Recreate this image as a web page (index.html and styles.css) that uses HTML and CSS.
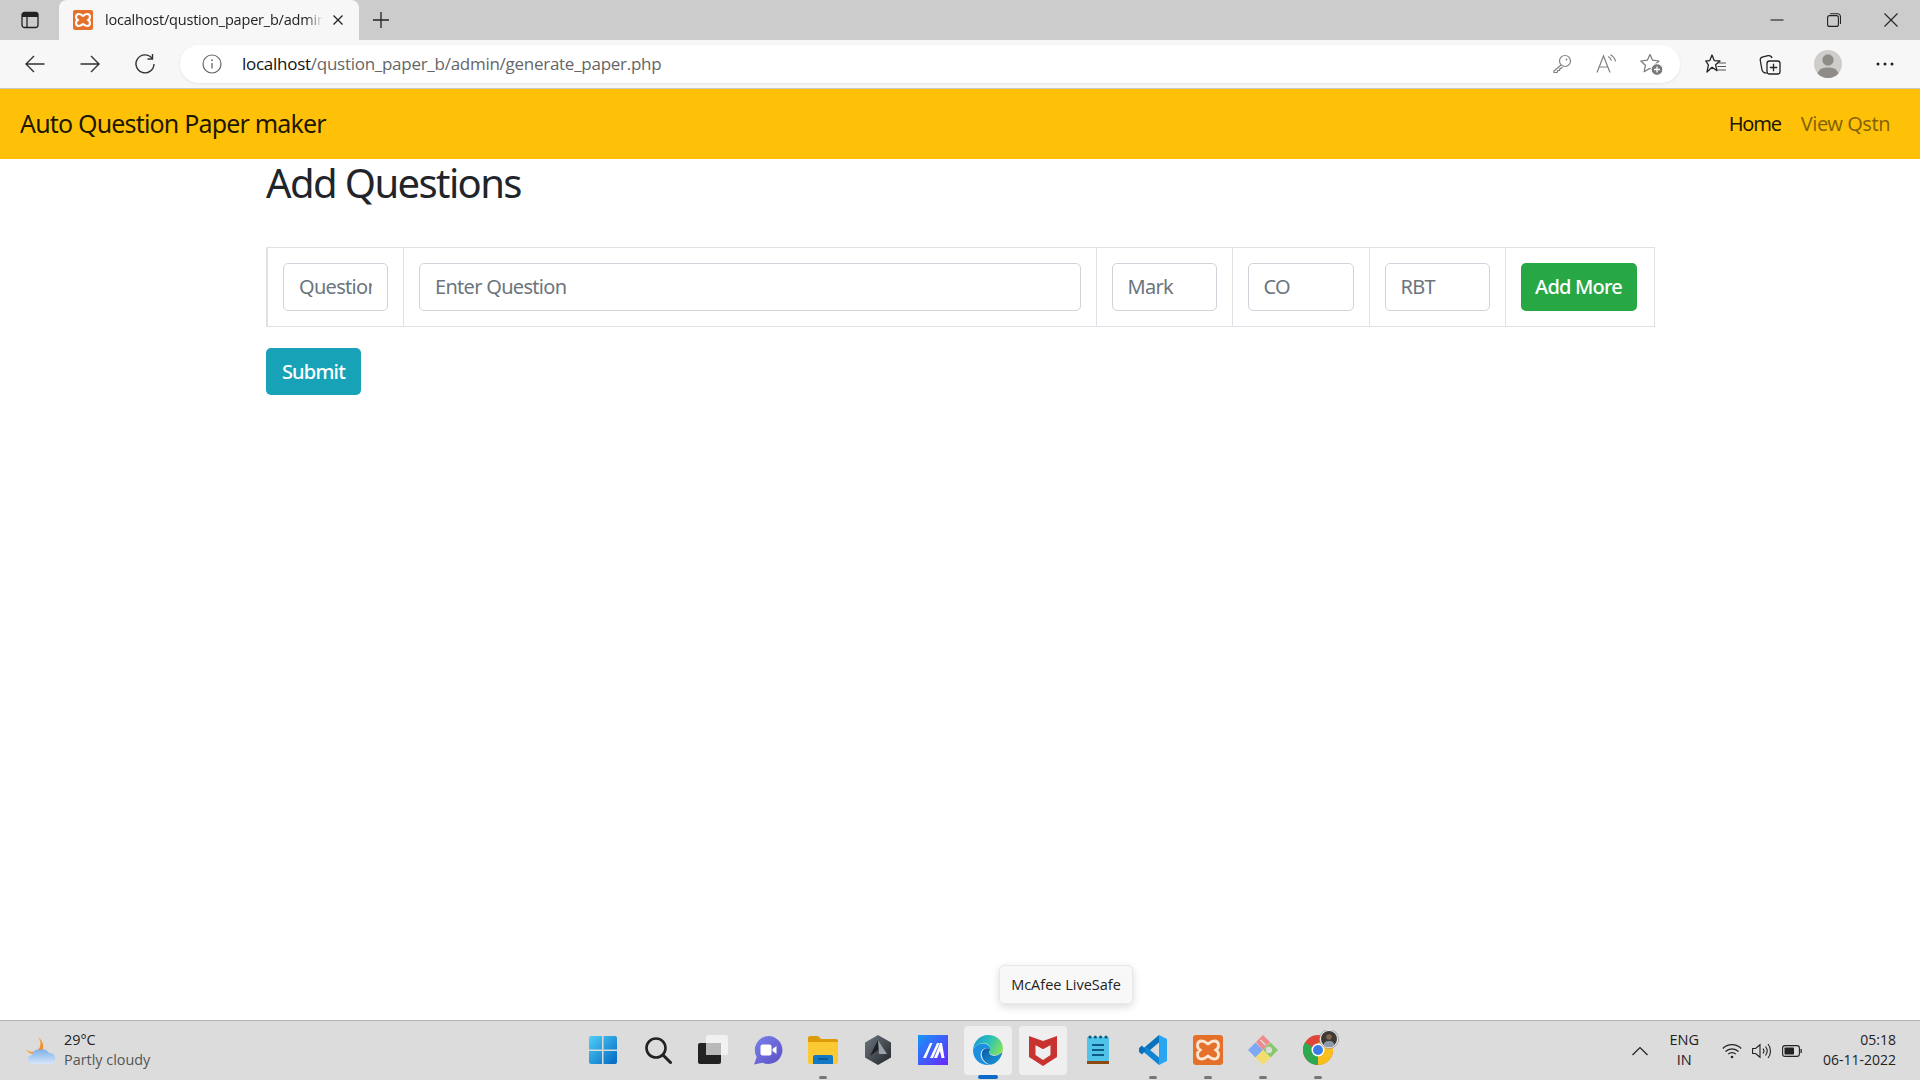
FILE: index.html
```html
<!DOCTYPE html>
<html lang="en">
<head>
<meta charset="utf-8">
<title>Auto Question Paper maker</title>
<link rel="stylesheet" href="styles.css">
</head>
<body>
<div class="tabstrip">
  <div class="tabside"><svg width="20" height="20" viewBox="0 0 20 20"><rect x="2" y="2.500" width="16" height="15" rx="2.500" fill="none" stroke="#222" stroke-width="1.300"/><path d="M2 5a2.500 2.500 0 0 1 2.500-2.500h11A2.500 2.500 0 0 1 18 5v2H2z" fill="#222"/><path d="M7 7v10.500" stroke="#222" stroke-width="1.300"/></svg></div>
  <div class="tab">
    <svg class="favicon" width="20" height="20" viewBox="0 0 30 30"><rect width="30" height="30" rx="3" fill="#e5702a"/><path d="M9 6c-3 0-4.500 2-4.500 4.500 0 2 1 3.500 2.500 4.500-1.500 1-2.500 2.500-2.500 4.500 0 2.500 1.500 4.500 4.500 4.500 2.500 0 4-1.500 6-3 2 1.500 3.500 3 6 3 3 0 4.500-2 4.500-4.500 0-2-1-3.500-2.500-4.500 1.500-1 2.500-2.500 2.500-4.500C25.500 8 24 6 21 6c-2.500 0-4 1.500-6 3-2-1.500-3.500-3-6-3z" fill="none" stroke="#fff" stroke-width="3.200"/></svg>
    <span class="tabtitle">localhost/qustion_paper_b/admin/generate_paper.php</span>
    <svg class="tabclose" width="12" height="12" viewBox="0 0 12 12"><path d="M1.500 1.500l9 9M10.500 1.500l-9 9" stroke="#222" stroke-width="1.300"/></svg>
  </div>
  <div class="newtab"><svg width="18" height="18" viewBox="0 0 18 18"><path d="M9 1v16M1 9h16" stroke="#222" stroke-width="1.300"/></svg></div>
  <div class="spacer"></div>
  <div class="winbtn"><svg width="14" height="14" viewBox="0 0 14 14"><path d="M0.500 7h13" stroke="#222" stroke-width="1.100"/></svg></div>
  <div class="winbtn"><svg width="14" height="14" viewBox="0 0 14 14"><rect x="0.600" y="2.600" width="10.800" height="10.800" rx="2" fill="none" stroke="#222" stroke-width="1.100"/><path d="M3.200 0.800h7.300a3 3 0 0 1 3 3v7.300" fill="none" stroke="#222" stroke-width="1.100"/></svg></div>
  <div class="winbtn"><svg width="14" height="14" viewBox="0 0 14 14"><path d="M0.500 0.500l13 13M13.500 0.500l-13 13" stroke="#222" stroke-width="1.100"/></svg></div>
</div>

<div class="toolbar">
  <div class="toolbtn"><svg width="22" height="22" viewBox="0 0 22 22"><path d="M20.500 11H2M10 3l-8 8 8 8" fill="none" stroke="#333" stroke-width="1.400"/></svg></div>
  <div class="toolbtn"><svg width="22" height="22" viewBox="0 0 22 22"><path d="M1.500 11H20M12 3l8 8-8 8" fill="none" stroke="#333" stroke-width="1.400"/></svg></div>
  <div class="toolbtn"><svg width="22" height="22" viewBox="0 0 22 22"><path d="M18 5.200A9 9 0 1 0 20 11" fill="none" stroke="#333" stroke-width="1.400"/><path d="M18.500 1v5h-5" fill="none" stroke="#333" stroke-width="1.400"/></svg></div>
  <div class="addressbar">
    <svg class="infoicon" width="20" height="20" viewBox="0 0 20 20"><circle cx="10" cy="10" r="9" fill="none" stroke="#666" stroke-width="1.200"/><path d="M10 9v5.500" stroke="#666" stroke-width="1.300"/><circle cx="10" cy="6.200" r="0.900" fill="#666"/></svg>
    <span class="url"><span class="urlhost">localhost</span>/qustion_paper_b/admin/generate_paper.php</span>
    <div class="spacer"></div>
    <div class="addrbtn"><svg width="20" height="20" viewBox="0 0 20 20"><circle cx="13" cy="7" r="5.500" fill="none" stroke="#808080" stroke-width="1.200"/><circle cx="14.500" cy="5.500" r="0.900" fill="#808080"/><path d="M9 11l-7 6v1.500h3.200l.5-2h1.800l.5-2 1.500-.3.800-1.200" fill="none" stroke="#808080" stroke-width="1.200"/></svg></div>
    <div class="addrbtn"><svg width="22" height="20" viewBox="0 0 22 20"><path d="M1 18.500L7.500 2 14 18.500M3.300 13h8.400" fill="none" stroke="#808080" stroke-width="1.200"/><path d="M12 2.500a7 7 0 0 1 3.500 4M14.500 0.800a9.500 9.500 0 0 1 5 6.700" fill="none" stroke="#808080" stroke-width="1.200"/></svg></div>
    <div class="addrbtn"><svg width="24" height="24" viewBox="0 0 24 24"><path d="M10 2.500l2.600 5.700 6.400.8-4.700 4.300 1 4.700-5.800-1.500-5.300 3.200 1.200-6.400L.8 9l6.500-.8z" fill="none" stroke="#777" stroke-width="1.200" stroke-linejoin="round"/><circle cx="17" cy="17.500" r="5.800" fill="#777" stroke="#fff" stroke-width="1"/><path d="M17 14.500v6M14 17.500h6" stroke="#fff" stroke-width="1.300"/></svg></div>
  </div>
  <div class="toolbtn favbtn"><svg width="22" height="22" viewBox="0 0 22 22"><path d="M7 2l2.200 5.600 5.800.4-4.400 3.800 1.400 5.800L7 14.300 2 19l1.400-7.200L0.800 8 4.800 7.600z" fill="none" stroke="#222" stroke-width="1.300" stroke-linejoin="round"/><path d="M13.500 10H21M12.500 13.500H21M11.500 17H21" stroke="#555" stroke-width="1.200"/></svg></div>
  <div class="toolbtn"><svg width="22" height="22" viewBox="0 0 22 22"><path d="M7.500 20C5 20 3.600 19 3 16.800L1.300 7.500C1 5.500 2 4.200 4 3.800L9 2.700c2-.3 3.400.3 4 2.300" fill="none" stroke="#222" stroke-width="1.300"/><rect x="8" y="8" width="13" height="13" rx="2.500" fill="#f7f7f7" stroke="#222" stroke-width="1.300"/><path d="M14.500 10.800v7.400M10.800 14.500h7.400" stroke="#222" stroke-width="1.300"/></svg></div>
  <div class="toolbtn profile"><svg width="28" height="28" viewBox="0 0 28 28"><circle cx="14" cy="14" r="14" fill="#cfcdcb"/><circle cx="14" cy="10" r="5.700" fill="#8f8b87"/><path d="M3.500 23.500C5 19 9 17.500 14 17.500s9 1.500 10.500 6A14 14 0 0 1 14 28 14 14 0 0 1 3.500 23.500z" fill="#8f8b87"/></svg></div>
  <div class="toolbtn morebtn"><svg width="18" height="6" viewBox="0 0 18 6"><circle cx="2" cy="3" r="1.500" fill="#222"/><circle cx="9" cy="3" r="1.500" fill="#222"/><circle cx="16" cy="3" r="1.500" fill="#222"/></svg></div>
</div>

<nav class="navbar">
  <a class="brand">Auto Question Paper maker</a>
  <div class="navlinks">
    <a class="navlink active">Home</a>
    <a class="navlink">View Qstn</a>
  </div>
</nav>

<main class="content">
  <h2 class="title">Add Questions</h2>
  <table class="qtable">
    <colgroup>
      <col class="c1"><col class="c2"><col class="c3"><col class="c4"><col class="c5"><col class="c6">
    </colgroup>
    <tr>
      <td><input class="field" placeholder="Question No"></td>
      <td><input class="field" placeholder="Enter Question"></td>
      <td><input class="field" placeholder="Mark"></td>
      <td><input class="field" placeholder="CO"></td>
      <td><input class="field" placeholder="RBT"></td>
      <td><button class="btn green">Add More</button></td>
    </tr>
  </table>
  <button class="btn teal">Submit</button>
</main>

<div class="tooltip">McAfee LiveSafe</div>

<footer class="taskbar">
  <div class="weather">
    <svg width="34" height="30" viewBox="0 0 34 30"><defs><linearGradient id="moon" x1="0" y1="0" x2="1" y2="1"><stop offset="0" stop-color="#f9c74f"/><stop offset="1" stop-color="#f07b1d"/></linearGradient><linearGradient id="cloud" x1="0" y1="0" x2="0" y2="1"><stop offset="0" stop-color="#7fb0e8"/><stop offset="1" stop-color="#d6e6fa"/></linearGradient></defs><path d="M15 1c4 5 3 12-2 14-3 1.500-7 1-10-2 2 5 9 7 14 4 5-4 4-12-2-16z" fill="url(#moon)"/><path d="M10 28a4.500 4.500 0 0 1-1-9 6 6 0 0 1 8-5 7 7 0 0 1 9 3 5.500 5.500 0 0 1 1.500 11z" fill="url(#cloud)"/></svg>
    <div class="weathertext"><span class="temp">29°C</span><span class="cond">Partly cloudy</span></div>
  </div>
  <div class="apps">
    <div class="app"><svg width="30" height="30" viewBox="0 0 30 30"><defs><linearGradient id="win" x1="0" y1="0" x2="1" y2="1"><stop offset="0" stop-color="#4fd0f9"/><stop offset="1" stop-color="#0067c0"/></linearGradient></defs><path d="M1 3a2 2 0 0 1 2-2h11v13.500H1zM15.500 1H27a2 2 0 0 1 2 2v11.500H15.500zM1 16h13v13H3a2 2 0 0 1-2-2zM15.500 16H29v11a2 2 0 0 1-2 2H15.500z" fill="url(#win)"/></svg></div>
    <div class="app"><svg width="28" height="28" viewBox="0 0 28 28"><circle cx="12" cy="12" r="9.500" fill="none" stroke="#222" stroke-width="2.600"/><path d="M19 19l7.500 7.500" stroke="#222" stroke-width="3" stroke-linecap="round"/></svg></div>
    <div class="app"><svg width="30" height="30" viewBox="0 0 30 30"><rect x="8" y="0" width="22" height="20" rx="2" fill="#f4f4f4" opacity="0.85"/><rect x="0" y="8" width="23" height="21" rx="2" fill="#222"/><rect x="8" y="8" width="15" height="12" fill="#b9b9b9"/></svg></div>
    <div class="app"><svg width="30" height="30" viewBox="0 0 30 30"><defs><linearGradient id="chat" x1="0" y1="0" x2="1" y2="1"><stop offset="0" stop-color="#7b83eb"/><stop offset="1" stop-color="#5b4fc4"/></linearGradient></defs><path d="M15.500 1a14 14 0 1 1-6 26.700L1 29.500l2.700-7.500A14 14 0 0 1 15.500 1z" fill="url(#chat)"/><rect x="7.500" y="9.500" width="11" height="11" rx="2" fill="#fff"/><path d="M19.500 14l4-3v8l-4-3z" fill="#fff"/></svg></div>
    <div class="app dot"><svg width="30" height="28" viewBox="0 0 30 28"><path d="M0 2a2 2 0 0 1 2-2h8l3 3h15a2 2 0 0 1 2 2v4H0z" fill="#dc9b08"/><path d="M0 6h30v20a2 2 0 0 1-2 2H2a2 2 0 0 1-2-2z" fill="#fbc932"/><path d="M5 21a2 2 0 0 1 2-2h16a2 2 0 0 1 2 2v7H5z" fill="#1479c4"/><path d="M10 23h10" stroke="#0b4f87" stroke-width="1.400"/></svg></div>
    <div class="app"><svg width="28" height="30" viewBox="0 0 28 30"><defs><linearGradient id="hexg" x1="0" y1="0" x2="1" y2="1"><stop offset="0" stop-color="#6f7780"/><stop offset="1" stop-color="#23262b"/></linearGradient></defs><path d="M14 0l13 7.500v15L14 30 1 22.500v-15z" fill="url(#hexg)"/><path d="M14 5l9 14-9-4-8 6z" fill="#1d2024"/><path d="M14 5l9 14H15z" fill="#9aa2aa"/></svg></div>
    <div class="app"><svg width="30" height="30" viewBox="0 0 30 30"><defs><linearGradient id="mag" x1="0" y1="0" x2="1" y2="1"><stop offset="0" stop-color="#1597f5"/><stop offset="1" stop-color="#6a24ff"/></linearGradient></defs><rect width="30" height="30" fill="url(#mag)"/><path d="M5 23L12 8h2.500L8 23zM12 23l7-15h2.500L15 23zM19 23l3-7 1.500 7h3L24 8h-2l-6 15" fill="#fff"/></svg></div>
    <div class="app hover live"><svg width="30" height="30" viewBox="0 0 30 30"><defs><linearGradient id="edgea" x1="0" y1="0.300" x2="1" y2="0.700"><stop offset="0" stop-color="#1a9ad8"/><stop offset="0.500" stop-color="#2fc4b2"/><stop offset="1" stop-color="#86e35a"/></linearGradient><linearGradient id="edgeb" x1="0" y1="0" x2="1" y2="1"><stop offset="0" stop-color="#0c59a4"/><stop offset="1" stop-color="#1b9de2"/></linearGradient></defs><path d="M15 0C24 0 30 6 30 14c0 3.500-3 6-8 6-3.500 0-6-1.300-6-3 0-1 1.200-1.500 1.200-3.500 0-3-3-5.500-7-5.500C6 8.500 2 11 0 15 .5 6.500 7 0 15 0z" fill="url(#edgea)"/><path d="M0 15c2-4 6-6.500 10.200-6.500 4 0 7 2.500 7 5.500-3.500-1.500-9-.5-9.500 5-.4 4.500 3.500 9.500 9.800 10.800C8 31 0 25 0 15z" fill="#1c8fe0"/><path d="M16 17c0 3 5 5 9 3 2-.8 3.500-2 4.500-3C28 24 23 29 17.500 29.800 12 28 8.500 23.500 8.700 19c.5-5.500 6-6.500 8.500-5 0 1.500-1.200 2-1.200 3z" fill="url(#edgeb)"/></svg></div>
    <div class="app hover"><svg width="28" height="32" viewBox="0 0 28 32"><path d="M0 2l7 2.500L14 7l7-2.500L28 2v21L14 32 0 23z" fill="#c8322f"/><path d="M6.500 11l7.500 4 7.500-4v10L14 26l-7.500-5z" fill="#eeeeee"/><path d="M6.500 8.500v2.500l7.500 4 7.500-4V8.500L14 12.500z" fill="#c8322f"/></svg></div>
    <div class="app"><svg width="24" height="30" viewBox="0 0 24 30"><rect x="1" y="2" width="22" height="26" rx="1" fill="#4fc3e8"/><rect x="1" y="26" width="22" height="3" fill="#8a4a12"/><path d="M6 10h12M6 15h12M6 20h12" stroke="#0e5c86" stroke-width="2"/><circle cx="4" cy="2" r="1.600" fill="#0e5c86"/><circle cx="9.300" cy="2" r="1.600" fill="#0e5c86"/><circle cx="14.600" cy="2" r="1.600" fill="#0e5c86"/><circle cx="20" cy="2" r="1.600" fill="#0e5c86"/></svg></div>
    <div class="app dot"><svg width="32" height="30" viewBox="0 0 32 30"><path d="M22 0l8 4v22l-8 4z" fill="#2aa5f2"/><path d="M22 0v7.500L9.500 18 5 14.500z" fill="#0a72bd"/><path d="M22 30v-7.500L9.500 12 5 15.500z" fill="#0d84d4"/><path d="M5 10.500l-3 2.500v4l3 2.500 4-4.500z" fill="#0a72bd"/></svg></div>
    <div class="app dot"><svg width="30" height="30" viewBox="0 0 30 30"><rect width="30" height="30" rx="3" fill="#e5702a"/><path d="M9 6c-3 0-4.500 2-4.500 4.500 0 2 1 3.500 2.500 4.500-1.500 1-2.500 2.500-2.500 4.500 0 2.500 1.500 4.500 4.500 4.500 2.500 0 4-1.500 6-3 2 1.500 3.500 3 6 3 3 0 4.500-2 4.500-4.500 0-2-1-3.500-2.500-4.500 1.500-1 2.500-2.500 2.500-4.500C25.500 8 24 6 21 6c-2.500 0-4 1.500-6 3-2-1.500-3.500-3-6-3z" fill="none" stroke="#fbe6d6" stroke-width="2.800"/></svg></div>
    <div class="app dot"><svg width="30" height="30" viewBox="0 0 30 30"><path d="M7.500 7.500L15 15l-7.500 7.500L0 15z" fill="#7da8f5"/><path d="M15 0l7 7-7 8-7-8z" fill="#ef8a8a"/><path d="M12.500 5l5 5" stroke="#dcdcdc" stroke-width="1.500"/><path d="M22.500 7.500L30 15l-7.500 7.500L15 15z" fill="#86c966"/><circle cx="21" cy="15" r="3.200" fill="#dcdcdc"/><path d="M15 15l7.500 7.500L15 30l-7.500-7.500z" fill="#f3dd6e"/></svg></div>
    <div class="app dot chromewrap"><svg width="40" height="40" viewBox="0 0 40 40"><circle cx="15" cy="20" r="15" fill="#de4638"/><path d="M15 20L2 27.500A15 15 0 0 0 15 35z" fill="#2da94f"/><path d="M15 20L2 27.500A15 15 0 0 1 2 12.500z" fill="#2da94f"/><path d="M15 20v15a15 15 0 0 0 13-22.500H15z" fill="#f9c01d"/><circle cx="15" cy="20" r="6.500" fill="#fff"/><circle cx="15" cy="20" r="5" fill="#3b7de8"/><circle cx="26" cy="9" r="9.500" fill="#ededed" stroke="#888" stroke-width="0.700"/><circle cx="26" cy="9" r="8" fill="#3e3a34"/><circle cx="26" cy="7" r="2.800" fill="#7f6650"/><path d="M20.500 15c.8-3.500 3-4 5.500-4s4.700.5 5.500 4a8 8 0 0 1-11 0z" fill="#8b99a8"/></svg></div>
  </div>
  <div class="tray">
    <svg class="chev" width="16" height="10" viewBox="0 0 16 10"><path d="M0.500 9L8 1.500 15.500 9" fill="none" stroke="#222" stroke-width="1.200"/></svg>
    <div class="lang"><span>ENG</span><span>IN</span></div>
    <svg class="tray-ic" width="20" height="16" viewBox="0 0 20 16"><path d="M0.800 5.500a13 13 0 0 1 18.400 0M3.500 8.500a9.200 9.200 0 0 1 13 0M6.200 11.200a5.300 5.300 0 0 1 7.600 0" fill="none" stroke="#222" stroke-width="1.200"/><circle cx="10" cy="14" r="1.300" fill="#222"/></svg>
    <svg class="tray-ic" width="20" height="16" viewBox="0 0 20 16"><path d="M0.600 5.500h3L8 1.800v12.400L3.600 10.500h-3z" fill="none" stroke="#222" stroke-width="1.100"/><path d="M11 5.500a4 4 0 0 1 0 5M13.500 3.500a7.500 7.500 0 0 1 0 9M16 1a11 11 0 0 1 0 14" fill="none" stroke="#222" stroke-width="1.100"/></svg>
    <svg class="tray-ic" width="20" height="12" viewBox="0 0 20 12"><rect x="0.600" y="0.600" width="16.800" height="10.800" rx="2.500" fill="none" stroke="#222" stroke-width="1.100"/><rect x="2.500" y="2.500" width="9.500" height="7" rx="0.800" fill="#222"/><path d="M18.500 4h1.300v4h-1.300z" fill="#222"/></svg>
    <div class="clock"><span>05:18</span><span>06-11-2022</span></div>
  </div>
</footer>
</body>
</html>
```

FILE: styles.css
```css
* { box-sizing: border-box; }
html, body { margin: 0; height: 100%; }
body {
  display: flex;
  flex-direction: column;
  height: 1080px;
  overflow: hidden;
  background: #fff;
  color: #212529;
  font-family: "Noto Sans", "Open Sans", sans-serif;
}
.spacer { flex: 1; }

.tabstrip { display: flex; align-items: stretch; height: 40px; background: #ccc; }
.tabside { width: 59px; display: flex; align-items: center; justify-content: center; }
.tab {
  width: 300px;
  display: flex;
  align-items: center;
  background: #f7f7f7;
  border-radius: 8px 8px 0 0;
  padding-left: 14px;
  padding-bottom: 1px;
}
.favicon { flex: none; }
.tabtitle {
  flex: none;
  width: 218px;
  margin-left: 12px;
  overflow: hidden;
  white-space: nowrap;
  font-family: "Open Sans", sans-serif;
  font-size: 14.500px;
  letter-spacing: -0.200px;
  line-height: 20px;
  color: #222;
  -webkit-mask-image: linear-gradient(to right, #000 92%, transparent);
  mask-image: linear-gradient(to right, #000 92%, transparent);
}
.tabclose { flex: none; margin-left: 9px; }
.newtab { width: 44px; display: flex; align-items: center; justify-content: center; }
.winbtn { width: 57px; display: flex; align-items: center; justify-content: center; }
.winbtn:last-child { margin-right: 1px; }

.toolbar {
  display: flex;
  align-items: center;
  height: 49px;
  padding-left: 7.500px;
  background: #f7f7f7;
  border-bottom: 1px solid #c8c8c8;
}
.toolbtn { width: 55px; height: 40px; display: flex; align-items: center; justify-content: center; }
.addressbar {
  width: 1500px;
  height: 38px;
  margin-left: 7.500px;
  margin-right: 7.500px;
  display: flex;
  align-items: center;
  padding-left: 22px;
  padding-right: 6px;
  background: #fff;
  border-radius: 19px;
  box-shadow: 0 1px 3px rgba(0,0,0,0.08);
}
.infoicon { flex: none; }
.url {
  margin-left: 20px;
  padding-bottom: 2px;
  font-family: "Open Sans", sans-serif;
  font-size: 17px;
  letter-spacing: -0.270px;
  color: #666;
  white-space: nowrap;
}
.urlhost { color: #111; }
.addrbtn { width: 45px; height: 32px; display: flex; align-items: center; justify-content: center; }
.favbtn { padding-left: 2px; }
.profile { margin-left: 3px; }
.morebtn { margin-left: 2px; }

.navbar {
  height: 70px;
  flex: none;
  display: flex;
  align-items: center;
  justify-content: space-between;
  padding: 0 20px 2px;
  background: #ffc107;
}
.brand { font-size: 25px; letter-spacing: -0.033em; color: rgba(0,0,0,0.9); }
.navlinks { display: flex; }
.navlink { padding: 0 10px; font-size: 20px; letter-spacing: -0.025em; color: rgba(0,0,0,0.5); }
.navlink.active { letter-spacing: -0.06em; color: rgba(0,0,0,0.9); }

.content { flex: 1; width: 1388px; margin: 0 auto; }
.title { margin: 0 0 40px; font-size: 40px; font-weight: 400; line-height: 48px; letter-spacing: -0.04em; }
.qtable {
  width: 1387px;
  table-layout: fixed;
  border-collapse: collapse;
  margin-bottom: 21px;
}
.c1 { width: 136.500px; }
.c2 { width: 692.500px; }
.c3 { width: 136px; }
.c4 { width: 137px; }
.c5 { width: 136px; }
.c6 { width: 149px; }
.qtable td { padding: 15px; border: 1px solid #dee2e6; }
.qtable td:first-child { border-left-width: 2px; }
.field {
  display: block;
  width: 100%;
  height: 47.500px;
  padding: 7.500px 15px;
  font: inherit;
  font-size: 20px;
  letter-spacing: -0.035em;
  border: 1px solid #ced4da;
  border-radius: 5px;
  color: #495057;
}
.field::placeholder { color: #6c757d; opacity: 1; }
.btn {
  display: inline-block;
  height: 47.500px;
  padding: 0 15px;
  font: inherit;
  font-size: 20px;
  font-weight: 500;
  letter-spacing: -0.04em;
  color: #fff;
  border: 1px solid transparent;
  border-radius: 5px;
}
.green { background: #28a745; width: 116px; padding: 0; }
.teal { background: #17a2b8; width: 95px; padding: 0; }

.tooltip {
  position: absolute;
  left: 999px;
  top: 965px;
  width: 134px;
  height: 39px;
  display: flex;
  align-items: center;
  justify-content: center;
  background: #f8f8f8;
  border: 1px solid #e8e8e8;
  border-radius: 5px;
  box-shadow: 0 3px 8px rgba(0,0,0,0.14);
  font-family: "Open Sans", sans-serif;
  font-size: 14.500px;
  color: #222;
  white-space: nowrap;
}

.taskbar {
  height: 60px;
  flex: none;
  display: grid;
  grid-template-columns: 1fr 770px 1fr;
  align-items: center;
  background: #dcdcdc;
  border-top: 1px solid #b4b4b4;
  font-family: "Open Sans", sans-serif;
  color: #222;
}
.weather { display: flex; align-items: center; padding-left: 23px; }
.weathertext { display: flex; flex-direction: column; margin-left: 7px; margin-top: -2px; font-size: 14.400px; line-height: 20px; }
.cond { color: #555; }
.apps { display: flex; align-self: stretch; }
.app { width: 55px; margin-top: -1px; position: relative; display: flex; align-items: center; justify-content: center; }
.app.hover::before {
  content: "";
  position: absolute;
  left: 3.500px;
  right: 3.500px;
  top: 6px;
  bottom: 5px;
  background: #efefef;
  border-radius: 4px;
}
.app svg { position: relative; }
.app.dot::after {
  content: "";
  position: absolute;
  left: 23.500px;
  bottom: 1px;
  width: 8px;
  height: 3px;
  border-radius: 2px;
  background: #777;
}
.app.live::after {
  content: "";
  position: absolute;
  left: 17.500px;
  bottom: 1px;
  width: 20px;
  height: 4px;
  border-radius: 2px;
  background: #0a6cc8;
}
.chromewrap svg { margin-left: 10px; }
.tray { display: flex; align-items: center; justify-content: flex-end; padding-right: 24px; }
.chev { flex: none; margin-right: 21px; }
.lang { display: flex; flex-direction: column; align-items: center; font-size: 14.500px; line-height: 20px; margin-right: 23px; margin-top: -2px; }
.tray-ic { flex: none; margin-right: 10px; }
.clock { display: flex; flex-direction: column; align-items: flex-end; font-size: 14px; line-height: 20px; margin-left: 11px; margin-top: -2px; }
```
